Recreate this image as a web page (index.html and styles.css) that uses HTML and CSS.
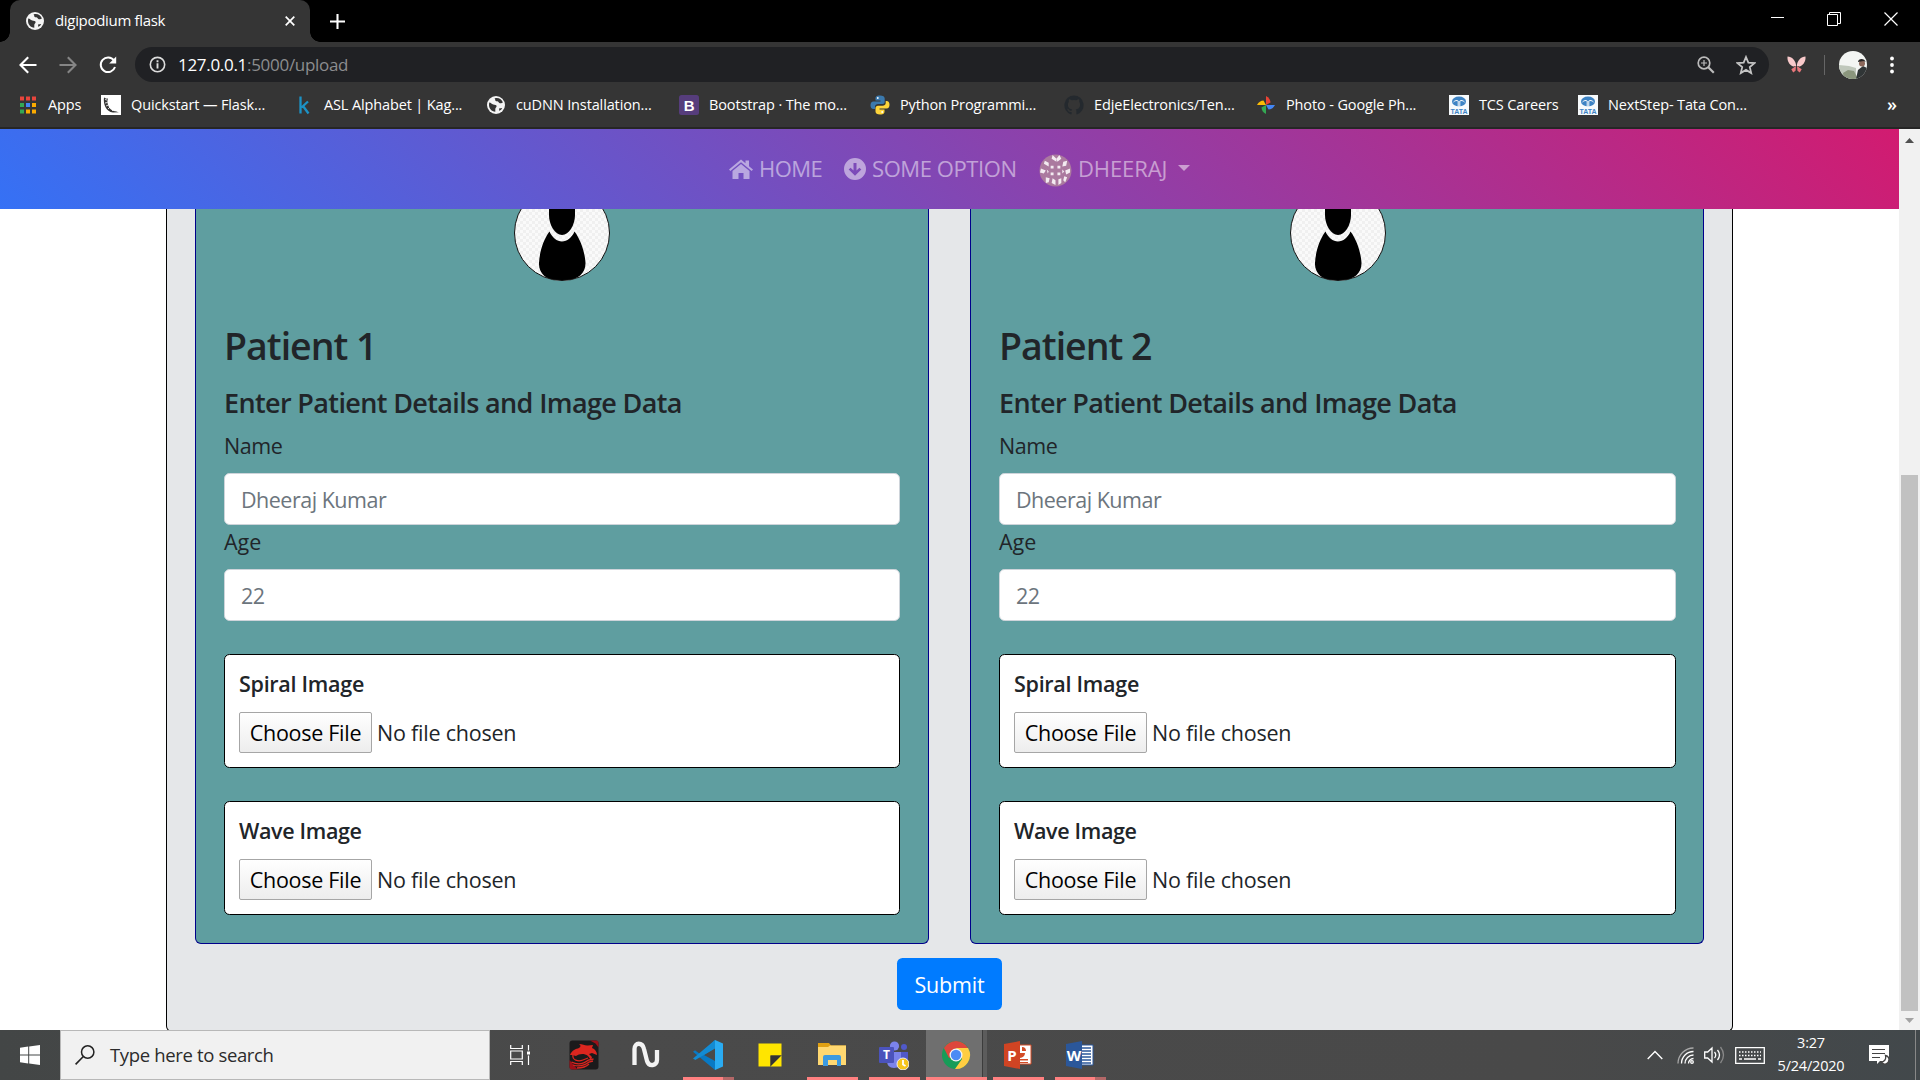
FILE: index.html
```html
<!DOCTYPE html>
<html lang="en">
<head>
<meta charset="utf-8">
<title>digipodium flask</title>
<link rel="stylesheet" href="styles.css">
</head>
<body>
<svg class="defs" aria-hidden="true">
  <defs>
    <symbol id="globe" viewBox="0 0 18 18"><circle cx="9" cy="9" r="9" fill="#f4f4f4"/><path d="M2.2 6.5c2 .2 2.4 1.6 4 2 1.500.4 3.400.2 3.400 1.700 0 1.200-1.300 1.400-1.300 2.800v2.800C4.500 15.500 2 12.500 2 9zM7.500 2.200c1.200.8.2 2 1.200 2.700 1 .6 2.300 0 2.800 1.200.4 1 1.500 1.400 2.700 1.200l1.700-.8c-.8-2.600-3.600-4.800-6.500-4.600zM12 12.500l3.200-.5c-.6 1.300-1.600 2.300-2.800 2.900z" fill="#353535"/></symbol>
    <symbol id="tata" viewBox="0 0 20 20"><rect width="20" height="20" fill="#f7fafc"/><ellipse cx="10" cy="6.500" rx="7" ry="5" fill="#3d83c4"/><path d="M9.200 12V6C8 5 6 5.500 4.500 7M10.800 12V6c1.200-1 3.200-.5 4.700 1" stroke="#f7fafc" stroke-width="1" fill="none"/><text x="10" y="18.700" text-anchor="middle" textLength="17" class="tata-word">TATA</text></symbol>
    <symbol id="person" viewBox="0 0 96 72">
      <defs><pattern id="check" width="6" height="6" patternUnits="userSpaceOnUse"><rect width="6" height="6" fill="#fafafa"/><path d="M0 0h3v3H0zM3 3h3v3H3z" fill="#f0f0f0"/></pattern>
      <clipPath id="disc"><circle cx="48" cy="24" r="47.500"/></clipPath></defs>
      <circle cx="48" cy="24" r="47.500" fill="url(#check)"/>
      <g clip-path="url(#disc)"><path d="M35 0h26v6c0 10-6 20-13 20S35 16 35 6z"/><path d="M35.500 22.500c2.500 6 7.500 10 12.500 10s10-4 12.500-10C67 31 71 44 71.500 54c.3 10-8 17-18 17h-11c-10 0-18-7-17.500-17 .5-10 4-23 10.500-31.500z"/></g>
      <circle cx="48" cy="24" r="47.500" fill="none" stroke="#111"/>
    </symbol>
  </defs>
</svg>

<header class="browser">
  <div class="tabstrip">
    <div class="tab">
      <svg class="i18"><use href="#globe"/></svg>
      <span class="tab-title">digipodium flask</span>
      <svg class="tab-close" viewBox="0 0 10 10"><path d="M.7.7l8.600 8.600M9.300.7L.7 9.300" stroke="#fff" stroke-width="1.700"/></svg>
    </div>
    <svg class="new-tab" viewBox="0 0 16 16"><path d="M8 0v16M0 8h16" stroke="#fff" stroke-width="2.200"/></svg>
    <div class="window-buttons">
      <svg viewBox="0 0 14 14"><path d="M1 5.500h13" stroke="#fff"/></svg>
      <svg viewBox="0 0 14 14"><path d="M.5 2.500h10v11h-10zM2.500 2.500v-2h11v11h-3" fill="none" stroke="#fff"/></svg>
      <svg viewBox="0 0 14 14"><path d="M.5.5l13 13M13.500.5l-13 13" stroke="#fff" stroke-width="1.200"/></svg>
    </div>
  </div>

  <div class="toolbar">
    <svg class="nav-icon" viewBox="0 0 18 18"><path d="M17.500 9H1.800M9.200 1.300L1.500 9l7.700 7.700" fill="none" stroke="#fff" stroke-width="2.100"/></svg>
    <svg class="nav-icon" viewBox="0 0 18 18"><path d="M.5 9h15.700M8.800 1.300L16.500 9l-7.700 7.700" fill="none" stroke="#858585" stroke-width="2.100"/></svg>
    <svg class="nav-icon" viewBox="0 0 18 18"><path d="M15 4.500A7.300 7.300 0 1 0 16 11" fill="none" stroke="#fff" stroke-width="2"/><path d="M17.200.5v7H10.200z" fill="#fff"/></svg>
    <div class="omnibox">
      <svg class="info" viewBox="0 0 18 18"><circle cx="9" cy="9" r="7.600" fill="none" stroke="#ddd" stroke-width="1.700"/><path d="M9 7.800v5.400M9 4.600v2" stroke="#ddd" stroke-width="2"/></svg>
      <span class="url"><b>127.0.0.1</b>:5000/upload</span>
      <svg class="mag" viewBox="0 0 18 18"><circle cx="7" cy="7" r="5.800" fill="none" stroke="#bbb" stroke-width="1.700"/><path d="M11.300 11.300l5.500 5.500" stroke="#bbb" stroke-width="2.200"/><path d="M7 4v6M4 7h6" stroke="#bbb" stroke-width="1.200"/></svg>
      <svg class="star" viewBox="0 0 18 18"><path d="M9 1.800l2.100 5.100 5.500.4-4.200 3.600 1.300 5.400L9 13.400l-4.700 2.900 1.300-5.400-4.200-3.600 5.500-.4z" fill="none" stroke="#c4c4c4" stroke-width="1.600"/></svg>
    </div>
    <svg class="butterfly" viewBox="0 0 20 18"><path d="M9.600 10.500C9.500 5 5 .5.500.5c-.5 4 1.500 9 6 10.500zM10.400 10.500C10.500 5 15 .5 19.500.5c.5 4-1.500 9-6 10.500z" fill="#f9c9ca"/><path d="M9.500 10.500L4.500 14l2 3.500 2.500-2zM10.500 10.500l5 3.500-2 3.500-2.500-2z" fill="#e8777b"/></svg>
    <span class="divider"></span>
    <svg class="profile" viewBox="0 0 28 28"><defs><clipPath id="pc"><circle cx="14" cy="14" r="14"/></clipPath></defs><g clip-path="url(#pc)"><path fill="#f3f5f3" d="M0 0h28v28H0z"/><path fill="#bfc7bb" d="M0 14l10 1 7 2v11H0z"/><path fill="#8b967d" d="M4 22l5-3 6 1 4 8H5z"/><path fill="#303536" d="M17 28l2-9 5-4 4 2v11z"/><circle cx="23" cy="12.500" r="3" fill="#8c685b"/><path d="M19 11c0-4 7-4 7.500 0l-2-1z" fill="#272525"/></g></svg>
    <svg class="dots" viewBox="0 0 4 18"><circle cx="2" cy="2.500" r="1.900"/><circle cx="2" cy="9" r="1.900"/><circle cx="2" cy="15.500" r="1.900"/></svg>
  </div>

  <nav class="bookmarks">
    <a><svg viewBox="0 0 20 20"><path fill="#e8453c" d="M2 1.500h4v4H2zM8 1.500h4v4H8zM14 1.500h4v4h-4z"/><path fill="#34a853" d="M2 8h4v4H2zM2 14.500h4v4H2z"/><path fill="#4285f4" d="M8 8h4v4H8z"/><path fill="#fbab00" d="M14 8h4v4h-4zM8 14.500h4v4H8zM14 14.500h4v4h-4z"/></svg><span>Apps</span></a>
    <a><svg viewBox="0 0 20 20"><path fill="#fff" d="M0 0h20v20H0z"/><path d="M3 2.500C2 9 5 17 12 17.500l6-.3c-3-1-8-1-10-5S6 5.500 7 3.500C5 4 4 3 3 2.500z" fill="#333"/><path d="M4 4.500l2 .5M4 8l2.500-.5M5 11l2.500-1M7 14l2-2M11 16l1.500-1.500" stroke="#fff" stroke-width=".8"/></svg><span>Quickstart — Flask...</span></a>
    <a><svg viewBox="0 0 20 20"><path d="M6.500 1.500V18.500M14 6.500L7.500 12.500M9 11l5.500 7.500" fill="none" stroke="#1c92c5" stroke-width="2.300"/></svg><span>ASL Alphabet | Kag...</span></a>
    <a><svg viewBox="-1 -1 20 20"><use href="#globe" width="18" height="18"/></svg><span>cuDNN Installation...</span></a>
    <a><svg viewBox="0 0 20 20"><rect width="20" height="20" rx="2.500" fill="#563d7c"/><text x="10" y="15.500" text-anchor="middle" class="bs">B</text></svg><span>Bootstrap · The mo...</span></a>
    <a><svg viewBox="0 0 20 20"><path d="M10 .5c-4 0-4.500 1.500-4.500 3v2h5v1H3.500C1.500 6.500.5 8 .5 10.300S1.500 14 3.500 14H5v-2.300C5 9.800 6.500 9 8 9h4.500c1.500 0 2.200-1 2.200-2.300V3.500C14.700 1.500 13 .5 10 .5z" fill="#3b79ad"/><path d="M10 19.500c4 0 4.500-1.500 4.500-3v-2h-5v-1h7c2 0 3-1.500 3-3.800S18.500 6 16.500 6h-.8v2c0 2-1.500 2.700-3 2.700H8c-1.500 0-2.500 1-2.500 2.300v3.500c0 2 1.700 3 4.500 3z" fill="#fdd43a"/><circle cx="7.800" cy="3" r=".9" fill="#fff"/><circle cx="12.200" cy="17" r=".9" fill="#fff"/></svg><span>Python Programmi...</span></a>
    <a><svg viewBox="0 0 20 20"><path d="M10 .5A9.700 9.700 0 0 0 7 19.400c.5.1.6-.2.600-.5v-2c-2.700.6-3.300-1.200-3.300-1.200-.4-1-1-1.400-1-1.400-.9-.6.1-.6.1-.6 1 .1 1.500 1 1.500 1 .9 1.500 2.300 1 2.800.8.1-.6.3-1 .6-1.300-2.100-.2-4.400-1.100-4.400-4.800 0-1 .4-1.900 1-2.600-.1-.2-.4-1.200.1-2.500 0 0 .8-.3 2.600 1a9 9 0 0 1 4.800 0c1.800-1.300 2.600-1 2.600-1 .5 1.300.2 2.300.1 2.500.6.7 1 1.600 1 2.600 0 3.700-2.300 4.600-4.400 4.800.4.300.7.9.7 1.800v2.900c0 .3.200.6.600.500A9.700 9.700 0 0 0 10 .5z" fill="#24292e"/></svg><span>EdjeElectronics/Ten...</span></a>
    <a><svg viewBox="0 0 20 20"><path d="M10 10V1c3 1.500 4.500 4 4.500 6.500L10 10z" fill="#ea4335"/><path d="M10 10h9c-1.500 3-4 4.500-6.500 4.500L10 10z" fill="#4285f4"/><path d="M10 10v9c-3-1.500-4.500-4-4.500-6.500L10 10z" fill="#34a853"/><path d="M10 10H1c1.500-3 4-4.500 6.500-4.500L10 10z" fill="#fbbc05"/></svg><span>Photo - Google Ph...</span></a>
    <a><svg><use href="#tata"/></svg><span>TCS Careers</span></a>
    <a><svg><use href="#tata"/></svg><span>NextStep- Tata Con...</span></a>
    <span class="more">»</span>
  </nav>
</header>

<div class="viewport">
  <div class="page">
    <nav class="navbar">
      <a class="nav-home"><svg viewBox="0 0 24 20"><path d="M0 10.500L12 .5l4.500 3.700V1.500H20v5.700l4 3.300-1.300 1.500L12 3.200 1.300 12z"/><path d="M3.500 12L12 5l8.500 7v8h-6v-6h-5v6h-6z"/></svg><span>HOME</span></a>
      <a class="nav-opt"><svg viewBox="0 0 22 22"><path fill-rule="evenodd" d="M11 0a11 11 0 1 1 0 22 11 11 0 0 1 0-22zM9.500 5v7.500L6.600 9.700 4.700 11.500 11 17.800l6.300-6.300-1.900-1.800-2.900 2.800V5z"/></svg><span>SOME OPTION</span></a>
      <a class="nav-user"><svg viewBox="0 0 34 34"><defs><clipPath id="uc"><circle cx="17" cy="17" r="16.500"/></clipPath></defs><g clip-path="url(#uc)"><path fill="#ab7a9f" d="M0 0h34v34H0z"/><path fill="#fff" fill-opacity=".85" d="M14 1l4 4v3l-5-3zM21 1l-3 4 1 3 4-3zM6 7l4 2v4l-5-3zM25 8l4-1-1 5-4 1zM2 15l5 2-2 3-4-1zM27 17l5-2v4l-4 2zM12 12h3v3h-3zM19 12h3v3h-3zM12 19h3v3h-3zM19 19h3v3h-3zM7 24l4 1-1 4-3 1zM14 25l3 2v5l-4-2zM20 26l3-1v5l-3 2zM26 23l3 1-2 5-2-2zM8 16l2 2-1 2zM24 16l2 2-2 2z"/></g></svg><span>DHEERAJ</span><i class="caret"></i></a>
    </nav>

    <form class="panel">
      <div class="patients">
        <section class="patient">
          <svg class="avatar"><use href="#person"/></svg>
          <h3>Patient 1</h3>
          <h5>Enter Patient Details and Image Data</h5>
          <label>Name</label>
          <input class="field" placeholder="Dheeraj Kumar">
          <label>Age</label>
          <input class="field" placeholder="22">
          <div class="upload"><h6 class="spiral">Spiral Image</h6><div class="file"><button type="button">Choose File</button><span>No file chosen</span></div></div>
          <div class="upload"><h6>Wave Image</h6><div class="file"><button type="button">Choose File</button><span>No file chosen</span></div></div>
        </section>
        <section class="patient">
          <svg class="avatar"><use href="#person"/></svg>
          <h3>Patient 2</h3>
          <h5>Enter Patient Details and Image Data</h5>
          <label>Name</label>
          <input class="field" placeholder="Dheeraj Kumar">
          <label>Age</label>
          <input class="field" placeholder="22">
          <div class="upload"><h6 class="spiral">Spiral Image</h6><div class="file"><button type="button">Choose File</button><span>No file chosen</span></div></div>
          <div class="upload"><h6>Wave Image</h6><div class="file"><button type="button">Choose File</button><span>No file chosen</span></div></div>
        </section>
      </div>
      <button type="button" class="submit">Submit</button>
    </form>
  </div>
  <div class="scrollbar">
    <svg viewBox="0 0 9 5"><path d="M4.500 0L9 5H0z" fill="#505050"/></svg>
    <div class="thumb"></div>
    <svg viewBox="0 0 9 5"><path d="M4.500 5L9 0H0z" fill="#a3a3a3"/></svg>
  </div>
</div>

<footer class="taskbar">
  <div class="start"><svg viewBox="0 0 20 20"><path d="M0 2.800L8.200 1.600v7.900H0zM9.200 1.400L20 0v9.500H9.200zM0 10.500h8.200v7.900L0 17.200zM9.200 10.500H20V20L9.200 18.600z" fill="#fff"/></svg></div>
  <div class="search"><svg viewBox="0 0 20 20"><circle cx="12.700" cy="7" r="6.200" fill="none" stroke="#222" stroke-width="1.500"/><path d="M8.300 11.500L.6 19.400" stroke="#222" stroke-width="1.600"/></svg><span>Type here to search</span></div>
  <div class="apps">
    <div class="app view"><svg viewBox="0 0 20 20" class="s20"><path d="M.7 0v3.500h11.600V0M.7 20v-3.500h11.600V20M.7 6h11.600v8H.7zM18.500 0v5.500M18.500 10.500V20" fill="none" stroke="#fff" stroke-width="1.200"/><path d="M17 6.500h3v3h-3z" fill="#fff"/></svg></div>
    <div class="app"><svg viewBox="0 0 30 30"><rect x=".5" y=".5" width="29" height="29" rx="3" fill="#1b1a1b"/><path d="M21 .5h6q2.500 0 2.500 3v4l-3-4zM.5 20v7q0 2.500 3 2.500h5z" fill="#9c1018"/><path d="M1 15c2-5 6-6 9-7 2-1 2-3 0-4 4 0 6 2 9 1.500L24 5l-1 3c3 1 5 4 5 7l-5-2-3 1 3 3-1 3-3-4c-4-3-9-2-12 0l-4-1z" fill="#dc261f"/><path d="M4 15c-1 5 5 7 10 5l5-2M2.500 22c6 3 12 2 17-2l5-1M4 25c6 2 11 1 16-3l4-1M8 28c5 0 9-1 12-4" fill="none" stroke="#dc261f" stroke-width="1.300"/></svg></div>
    <div class="app"><svg viewBox="0 0 30 30"><path d="M3.500 25V9c0-7 8-7 9.500 0l3 12c2 6 10 5 10-1v-10" fill="none" stroke="#f3f3f3" stroke-width="4.300"/></svg></div>
    <div class="app on part"><svg viewBox="0 0 30 30"><path d="M22 0L7 14l-5-3.800-2 1.500 22 18.300v-9l-11-6 11-7z" fill="#0879c4"/><path d="M0 18.500L22 0v8.500L2.300 20z" fill="#138bd3"/><path d="M22 0l8 3.500v23L22 30z" fill="#2aabf2"/></svg></div>
    <div class="app"><svg viewBox="0 0 30 30"><path d="M3.500 3.500h23v12h-11v11h-12z" fill="#ffe500"/><path d="M15.500 15.500h11l-11 11z" fill="#333"/><path d="M26.500 15.500v11h-11z" fill="#ffe500"/></svg></div>
    <div class="app on"><svg viewBox="0 0 30 30"><path d="M1 3h11l2 2.500h15V13H1z" fill="#e0a013"/><path d="M1 7h10l2-1.500h16V25H1z" fill="#ffd871"/><path d="M6 26v-9q0-2 2-2h14q2 0 2 2v9h-4v-6h-9v6z" fill="#3c9ae0"/></svg></div>
    <div class="app on"><svg viewBox="0 0 30 30"><circle cx="15.500" cy="6" r="4.600" fill="#7b83eb"/><circle cx="25" cy="7" r="3" fill="#5059c9"/><path d="M19 12h10v9q0 4-5 4h-5z" fill="#5059c9"/><path d="M8 12h14v9q0 7-7 7t-7-7z" fill="#7b83eb"/><rect y="7" width="15" height="16" rx="1" fill="#4b53bc"/><text x="7.500" y="19" text-anchor="middle" class="letter-t">T</text><circle cx="24" cy="24" r="6" fill="#f5c51d" stroke="#eee"/><path d="M24 20v4.500l2.500 1.500" fill="none" stroke="#fff" stroke-width="1.800"/></svg></div>
    <div class="app on active"><svg viewBox="0 0 30 30"><circle cx="15" cy="15" r="14" fill="#169c58"/><path d="M15 15l-7 3L2.900 8A14 14 0 0 1 27.100 8H15z" fill="#dd473c"/><path d="M15 8h12.100A14 14 0 0 1 14 29l7-10z" fill="#ffcd42"/><circle cx="15" cy="15" r="6.500" fill="#f5f5f5"/><circle cx="15" cy="15" r="5.200" fill="#4b8bf4"/></svg></div>
    <div class="app on"><svg viewBox="0 0 30 30"><path d="M14 5h14v19H14z" fill="#fff"/><path d="M17 8v5h5a5 5 0 1 1-5-5zM19 7v4h4a4 4 0 0 0-4-4zM17 19h8v1.500h-8zM17 22h8v1h-8z" fill="#d34c26"/><path d="M14 5h14v19H14" fill="none" stroke="#d34c26"/><path d="M1 4l16-3v28L1 26z" fill="#d04423"/><text x="9" y="20.500" text-anchor="middle" class="letter">P</text></svg></div>
    <div class="app on part"><svg viewBox="0 0 30 30"><path d="M14 5h14v20H14z" fill="#fff" stroke="#2b579a"/><path d="M17 8h9M17 11h9M17 14h9M17 17h9M17 20h9M17 23h9" stroke="#2b579a" stroke-width="1.300"/><path d="M1 4l16-3v28L1 26z" fill="#2b579a"/><text x="9" y="20.500" text-anchor="middle" class="letter">W</text></svg></div>
  </div>
  <div class="tray">
    <svg class="chev" viewBox="0 0 16 10"><path d="M.7 9L8 1.500 15.300 9" fill="none" stroke="#fff" stroke-width="1.400"/></svg>
    <svg class="wifi" viewBox="0 0 18 18"><path d="M1 17.500A15.500 15.500 0 0 1 16.500 2" stroke="#aaa"/><path d="M4.500 17.500a12 12 0 0 1 12-12M8 17.500A8.500 8.500 0 0 1 16.500 9M11.500 17.500a5 5 0 0 1 5-5" stroke="#fff"/><circle cx="15" cy="16" r="1.300" stroke="#fff"/></svg>
    <svg class="vol" viewBox="0 0 21 18"><path d="M.7 6h3L8 2v14l-4.300-4h-3zM10.500 6q2.500 3 0 6M13.500 4q4 5 0 10" stroke="#fff"/><path d="M16.500 1q6 8 0 16" stroke="#888"/></svg>
    <svg class="kbd" viewBox="0 0 30 17"><path d="M.7.7h28.600v15.600H.7z" stroke="#fff"/><path d="M4 5h22M4 8.500h22" stroke="#fff" stroke-dasharray="1.500 1.500"/><path d="M4 12h3M9 12h12M23 12h3" stroke="#fff"/></svg>
    <div class="clock"><span class="time">3:27</span><span class="date">5/24/2020</span></div>
    <svg class="note" viewBox="0 0 20 20"><path d="M0 0h20v16h-9l-3 3v-3H0z" fill="#fff"/><path d="M3 4.500h13M3 8.500h13M3 12.500h8" stroke="#444" stroke-width="1.200"/><path d="M16.500 10.500c1 4-1.500 6.500-4.500 6.500 3 4 8 1.500 8-2.500 0-2-1.500-3.500-3.500-4z" fill="#fff" stroke="#444"/></svg>
    <span class="peek"></span>
  </div>
</footer>
</body>
</html>
```
FILE: styles.css
```css
* { box-sizing: border-box; }
body {
  margin: 0;
  width: 1920px;
  height: 1080px;
  overflow: hidden;
  display: flex;
  flex-direction: column;
  font-family: "Open Sans", "Noto Sans", sans-serif;
  color: #212529;
}
svg { display: block; flex: none; }
.defs { position: absolute; width: 0; height: 0; }
span, h3, h5, h6, label { white-space: nowrap; }

/* Browser chrome */
.browser {
  height: 129px;
  flex: none;
  background: #353535;
  border-bottom: 2px solid #262626;
  color: #fff;
}
.tabstrip { height: 42px; display: flex; align-items: center; background: #000; }
.tab {
  width: 300px;
  height: 42px;
  margin-left: 10px;
  padding: 0 15px 0 16px;
  display: flex;
  align-items: center;
  background: #353535;
  border-radius: 10px 10px 0 0;
  position: relative;
}
.tab::before, .tab::after {
  content: "";
  position: absolute;
  bottom: 0;
  width: 10px;
  height: 10px;
}
.tab::before { left: -10px; background: radial-gradient(circle at 0 0, #000 9.500px, #353535 10px); }
.tab::after { right: -10px; background: radial-gradient(circle at 100% 0, #000 9.500px, #353535 10px); }
.i18 { width: 18px; height: 18px; }
.tab-title { margin-left: 11px; padding-bottom: 2px; font-size: 15px; letter-spacing: -0.32px; }
.tab-close { width: 10px; height: 10px; margin-left: auto; }
.new-tab { width: 15px; height: 15px; margin-left: 20px; }
.window-buttons { margin: -5px 22px 0 auto; display: flex; gap: 43px; }
.window-buttons svg { width: 14px; height: 14px; }

.toolbar { height: 45px; display: flex; align-items: center; padding-left: 19px; }
.nav-icon { width: 18px; height: 18px; margin-right: 22px; }
.omnibox {
  width: 1634px;
  height: 35px;
  margin-left: -4px;
  padding: 0 13px 0 14px;
  border-radius: 18px;
  background: #202124;
  display: flex;
  align-items: center;
}
.info { width: 17px; height: 17px; }
.url { margin-left: 12px; font-size: 17px; letter-spacing: -0.3px; color: #8c8d8f; }
.url b { font-weight: 400; color: #fff; }
.mag { width: 18px; height: 18px; margin-left: auto; }
.star { width: 20px; height: 20px; margin-left: 21px; }
.butterfly { width: 19px; height: 17px; margin-left: 18px; }
.divider { width: 1px; height: 20px; margin-left: 18px; background: #666; }
.profile { width: 28px; height: 28px; margin-left: 14px; }
.dots { width: 4px; height: 18px; margin-left: 23px; fill: #fff; }

.bookmarks {
  height: 36px;
  padding-left: 18px;
  display: grid;
  grid-template-columns: 83px 193px 192px 193px 191px 194px 192px 193px 129px 309px 20px;
  align-items: center;
  font-size: 14.500px;
  letter-spacing: -0.13px;
}
.bookmarks a { display: flex; align-items: center; gap: 10px; }
.bookmarks span { padding-bottom: 2px; }
.bookmarks svg { width: 20px; height: 20px; }
.more { font-size: 18px; font-weight: 600; }
.tata-word { font: bold 7px "Liberation Sans", sans-serif; fill: #3d83c4; }
.bs { font: bold 15px "Liberation Sans", sans-serif; fill: #fff; }

/* Page */
.viewport { height: 901px; flex: none; display: flex; background: #fff; }
.page { width: 1899px; height: 901px; display: flex; flex-direction: column; align-items: center; overflow: hidden; }
.navbar {
  width: 100%;
  height: 80px;
  flex: none;
  padding-left: 729px;
  display: flex;
  align-items: center;
  background: linear-gradient(45deg, #3571f5, #d21b70);
  color: rgba(255, 255, 255, .5);
  font-size: 22px;
}
.navbar a { display: flex; align-items: center; }
.navbar span { padding-bottom: 3px; }
.navbar svg { fill: currentColor; }
.nav-home svg { width: 24px; height: 20px; margin-right: 6px; }
.nav-home { width: 115px; letter-spacing: -0.5px; }
.nav-opt svg { width: 22px; height: 22px; margin-right: 6px; }
.nav-opt { width: 195px; letter-spacing: -0.42px; }
.nav-user svg { width: 33px; height: 33px; margin: 3px 6px 0 0; }
.nav-user { letter-spacing: -0.1px; }
.caret { margin-left: 11px; margin-top: -3px; border: 6px solid transparent; border-top-color: currentColor; border-bottom: 0; }

.panel {
  width: 1567px;
  height: 823px;
  flex: none;
  margin: 0;
  padding: 0 28px;
  display: flex;
  flex-direction: column;
  align-items: center;
  background: #e5e7e9;
  border: 1px solid #000;
  border-top: 0;
  border-radius: 0 0 6px 6px;
}
.patients { width: 100%; display: flex; justify-content: space-between; }
.patient {
  width: 734px;
  height: 735px;
  padding: 0 28px;
  display: flex;
  flex-direction: column;
  background: #5f9ea0;
  border: 1px solid #00008b;
  border-top: 0;
  border-radius: 0 0 6px 6px;
}
.patient + .patient { padding-right: 27px; }
.avatar { width: 96px; height: 72px; align-self: center; }
h3, h5, h6 { margin: 0; font-weight: 600; }
h3 { margin-top: 42px; font-size: 37.500px; line-height: 46px; letter-spacing: -1px; }
h5 { margin: 17px 0 11px; font-size: 27px; line-height: 33px; letter-spacing: -0.63px; }
label { font-size: 21.500px; line-height: 31px; height: 32px; margin-bottom: 11px; letter-spacing: -0.4px; }
.field {
  height: 52px;
  width: 100%;
  flex: none;
  padding: 0 16px;
  border: 1px solid #ced4da;
  border-radius: 5.500px;
  background: #fff;
  font: 21.500px "Open Sans", "Noto Sans", sans-serif;
  letter-spacing: -0.5px;
}
.field + label { height: 33px; line-height: 33px; letter-spacing: 0; }
.field::placeholder { color: #6c757d; }
.upload {
  height: 114px;
  margin-top: 33px;
  padding: 16px 14px 0;
  border: 1px solid #000;
  border-radius: 5.500px;
  background: #fff;
}
h6 { height: 41px; font-size: 21.500px; line-height: 26px; letter-spacing: -0.35px; }
h6.spiral { letter-spacing: -0.28px; }
.file { display: flex; align-items: center; font-size: 21.500px; letter-spacing: -0.22px; }
.file button {
  width: 133px;
  height: 41px;
  margin-right: 5px;
  padding: 0;
  border: 1px solid #a6a6a6;
  border-radius: 2px;
  background: linear-gradient(#fff, #ededed);
  font: inherit;
  letter-spacing: -0.28px;
  color: #000;
  white-space: nowrap;
}
.submit {
  width: 105px;
  height: 52px;
  margin-top: 14px;
  padding: 0;
  border: 0;
  border-radius: 5.500px;
  background: #007bff;
  color: #fff;
  font: 21.500px "Open Sans", "Noto Sans", sans-serif;
  letter-spacing: -0.15px;
}

.scrollbar {
  width: 21px;
  padding: 9px 0 7px;
  display: flex;
  flex-direction: column;
  align-items: center;
  background: #f1f1f1;
}
.scrollbar svg { width: 9px; height: 5px; }
.thumb { width: 17px; height: 536px; margin: auto 0 7px; background: #c1c1c1; }

/* Taskbar */
.taskbar { height: 50px; flex: none; display: flex; background: linear-gradient(90deg, #434646, #4a4a4a 30%, #494949 80%, #42484b); color: #fff; }
.start { width: 60px; display: flex; align-items: center; justify-content: center; }
.start svg { width: 20px; height: 20px; }
.search {
  width: 430px;
  padding-left: 14px;
  display: flex;
  align-items: center;
  background: #f1f1f1;
  border: 1px solid #b8b8b8;
  color: #2b2b2b;
  font-size: 18.500px;
  letter-spacing: -0.35px;
}
.search span { padding-bottom: 2px; }
.search svg { width: 20px; height: 20px; margin-right: 15px; }
.apps { display: flex; }
.app { width: 62px; display: flex; align-items: center; justify-content: center; border-bottom: 3px solid transparent; position: relative; }
.app svg { width: 30px; height: 30px; margin-top: 3px; }
.view { width: 63px; padding-right: 3px; }
.app .s20 { width: 20px; height: 20px; }
.on::after { content: ""; position: absolute; left: 6px; bottom: -3px; width: 51px; height: 3px; background: #ff8080; }
.part::after { background: linear-gradient(90deg, #ff8080 40px, #b36868 40px); }
.active { background: linear-gradient(90deg, transparent 1px, #6f6f6f 1px, #6f6f6f 57px, #3c3c3c 57px, #3c3c3c 58px, #5c5c5c 58px); background-origin: border-box; }
.active::after { left: 1px; width: 61px; }
.letter { font: bold 15px "Open Sans", sans-serif; fill: #fff; }
.letter-t { font: bold 12px "Open Sans", sans-serif; fill: #fff; }
.tray { margin-left: auto; display: flex; align-items: center; }
.tray svg { fill: none; stroke-width: 1.300; }
.chev { width: 16px; height: 10px; margin-right: 14px; }
.wifi { width: 18px; height: 18px; margin-right: 9px; }
.vol { width: 21px; height: 18px; margin-right: 10px; }
.kbd { width: 30px; height: 17px; margin-right: 8px; }
.clock { width: 76px; padding-bottom: 2px; display: flex; flex-direction: column; align-items: center; font-size: 14.500px; line-height: 23px; letter-spacing: -0.2px; }
.note { width: 20px; height: 20px; margin: 0 26px 0 20px; }
.peek { width: 1px; height: 50px; margin-right: 4px; background: #888; }
```
